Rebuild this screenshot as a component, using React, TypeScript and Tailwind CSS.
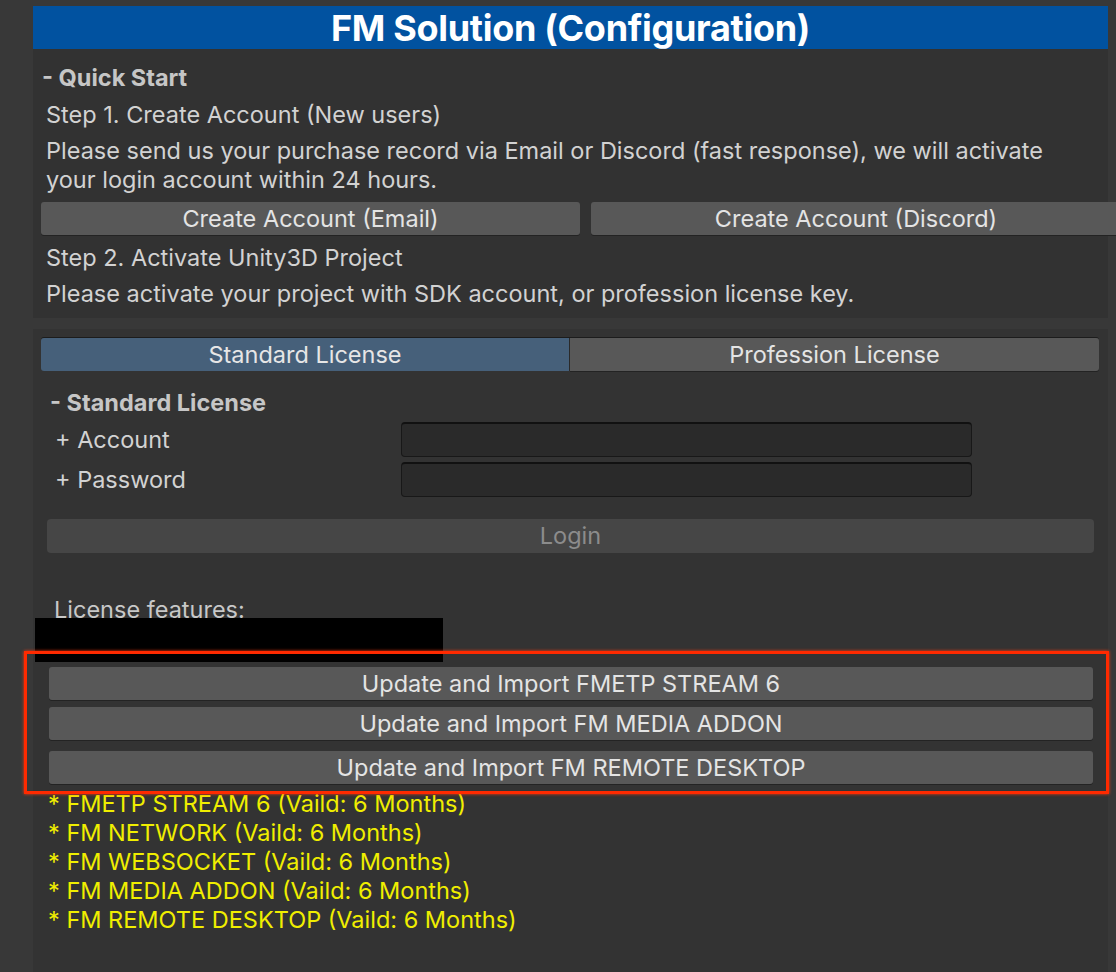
import React from "react";

const F = { fontFamily: "Inter, 'Noto Sans', sans-serif" };

function Line({ children, className = "" }: { children: React.ReactNode; className?: string }) {
  return <div className={`h-[29px] leading-[29px] whitespace-nowrap ${className}`}>{children}</div>;
}

function Btn({ children, className = "" }: { children: React.ReactNode; className?: string }) {
  return (
    <div
      className={`shrink-0 h-[33px] flex items-center justify-center rounded-[3px] bg-[#585858] text-[#e4e4e4] shadow-[0_1px_0_#232323] ${className}`}
    >
      {children}
    </div>
  );
}

export default function App() {
  const features = [
    "* FMETP STREAM 6 (Vaild: 6 Months)",
    "* FM NETWORK (Vaild: 6 Months)",
    "* FM WEBSOCKET (Vaild: 6 Months)",
    "* FM MEDIA ADDON (Vaild: 6 Months)",
    "* FM REMOTE DESKTOP (Vaild: 6 Months)",
  ];
  return (
    <div
      style={F}
      className="relative w-[1116px] h-[972px] overflow-hidden bg-[#383838] pt-[6px] pl-[33px] text-[23.5px] text-[#d2d2d2]"
    >
      <div className="w-[1075px] flex flex-col">
        {/* Title */}
        <div className="h-[43px] bg-[#0152a0] flex items-center justify-center text-white font-bold text-[36px] tracking-[-0.3px]">
          FM Solution (Configuration)
        </div>

        {/* Quick start panel */}
        <div className="bg-[#323232] h-[269px] pt-[14px] pl-[9px] flex flex-col">
          <Line className="font-bold text-[#c6c6c6]">- Quick Start</Line>
          <Line className="mt-[8px] pl-[4px]">Step 1. Create Account (New users)</Line>
          <div className="mt-[7px] pl-[4px] leading-[29px] whitespace-nowrap">
            Please send us your purchase record via Email or Discord (fast response), we will activate
            <br />
            your login account within 24 hours.
          </div>
          <div className="mt-[8px] -ml-[1px] flex gap-[11px] w-[1075px]">
            <Btn className="w-[539px]">Create Account (Email)</Btn>
            <Btn className="w-[530px] rounded-r-none">Create Account (Discord)</Btn>
          </div>
          <Line className="mt-[8px] pl-[4px]">Step 2. Activate Unity3D Project</Line>
          <Line className="mt-[7px] pl-[4px]">Please activate your project with SDK account, or profession license key.</Line>
        </div>

        <div className="h-[11px]" />

        {/* License panel */}
        <div className="bg-[#333333] h-[700px] pt-[8px] pl-[8px] pr-[9px] flex flex-col">
          <div className="flex h-[34px] rounded-[3px] border-t border-[#1c1c1c]">
            <div className="w-[528px] bg-[#46607a] flex items-center justify-center text-[#e6e6e6] rounded-l-[3px]">
              Standard License
            </div>
            <div className="w-[1px] bg-[#2a2a2a]" />
            <div className="flex-1 bg-[#585858] flex items-center justify-center text-[#e4e4e4] rounded-r-[3px] shadow-[0_1px_0_#232323]">
              Profession License
            </div>
          </div>

          <Line className="mt-[17px] pl-[9px] font-bold text-[#c6c6c6]">- Standard License</Line>

          <div className="mt-[5px] flex items-center h-[35px] pl-[14px]">
            <div className="w-[346px]">+ Account</div>
            <div className="w-[571px] h-[35px] rounded-[4px] bg-[#2a2a2a] border border-[#181818] border-t-[2px] border-t-[#111]" />
          </div>
          <div className="mt-[5px] flex items-center h-[35px] pl-[14px]">
            <div className="w-[346px]">+ Password</div>
            <div className="w-[571px] h-[35px] rounded-[4px] bg-[#2a2a2a] border border-[#181818] border-t-[2px] border-t-[#111]" />
          </div>

          <div className="mt-[22px] ml-[6px] w-[1047px] h-[34px] rounded-[4px] bg-[#464646] flex items-center justify-center text-[#8c8c8c]">
            Login
          </div>

          <Line className="mt-[42px] pl-[13px] text-[#c8c8c8]">License features:</Line>

          <div className="mt-[43px] ml-[8px] w-[1044px] flex flex-col">
            <Btn>Update and Import FMETP STREAM 6</Btn>
            <Btn className="mt-[7px]">Update and Import FM MEDIA ADDON</Btn>
            <Btn className="mt-[11px]">Update and Import FM REMOTE DESKTOP</Btn>
          </div>

          <div className="mt-[5px] pl-[7px] flex flex-col text-[#f0ee00]">
            {features.map((f) => (
              <Line key={f}>{f}</Line>
            ))}
          </div>
        </div>
      </div>

      {/* redaction block */}
      <div className="absolute left-[35px] top-[618px] w-[408px] h-[44px] bg-black" />

      {/* red highlight */}
      <div className="absolute left-[24px] top-[651px] w-[1085px] h-[143px] border-[3px] border-[#ff2a00] shadow-[0_0_3px_#ff3a10]" />
    </div>
  );
}
